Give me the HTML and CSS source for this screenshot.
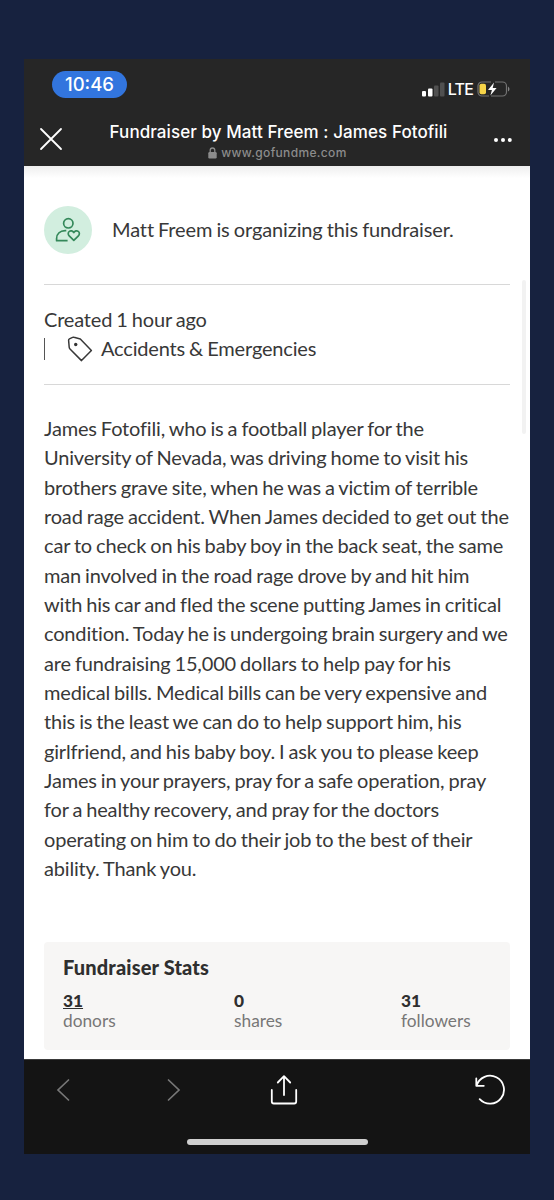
FILE: index.html
```html
<!DOCTYPE html>
<html lang="en">
<head>
  <meta charset="UTF-8">
  <title>Fundraiser by Matt Freem : James Fotofili</title>
  <link rel="stylesheet" href="styles.css">
</head>
<body>

<div class="phone">
  <header class="browser-top">
    <div class="status-bar">
      <span class="time-pill">10:46</span>
      <div class="status-icons">
        <svg class="signal" width="23" height="15" viewBox="0 0 23 15">
          <rect x="0" y="9" width="4" height="5.500" rx="1" fill="#fff"/>
          <rect x="6" y="6.500" width="4.500" height="8" rx="1" fill="#fff"/>
          <rect x="12" y="3.500" width="4.500" height="11" rx="1" fill="#505050"/>
          <rect x="18" y="0.500" width="4.500" height="14" rx="1" fill="#505050"/>
        </svg>
        <span class="network">LTE</span>
        <svg class="battery" width="33" height="16" viewBox="0 0 33 16">
          <path d="M14 1H5a4 4 0 0 0-4 4v6a4 4 0 0 0 4 4h7M18 1h7.500a4 4 0 0 1 4 4v6a4 4 0 0 1-4 4H14" fill="none" stroke="#737373" stroke-width="1.200"/>
          <path d="M31 5.500q1.500 1 1.500 2.500T31 10.500z" fill="#858585"/>
          <rect x="2.500" y="2.700" width="6.500" height="10.600" rx="1.800" fill="#f6d448"/>
          <path d="M17 1.500l-6 7.500h3.900l-1.500 5.500 6.200-7.500h-3.900z" fill="#fff"/>
        </svg>
      </div>
    </div>
    <div class="title-bar">
      <svg class="close" width="24" height="24" viewBox="0 0 24 24">
        <path d="M2 2l20 20M22 2L2 22" stroke="#fff" stroke-width="1.800" stroke-linecap="round"/>
      </svg>
      <div class="page-title">
        <strong>Fundraiser by Matt Freem : James Fotofili</strong>
        <span class="address">
          <svg width="9" height="12" viewBox="0 0 9 12">
            <path d="M2.200 5.500V3.300a2.300 2.300 0 0 1 4.600 0v2.200" fill="none" stroke="#8c8c8c" stroke-width="1.300"/>
            <rect x="0.300" y="5" width="8.400" height="6.500" rx="1.200" fill="#8c8c8c"/>
          </svg>
          www.gofundme.com
        </span>
      </div>
      <svg class="more" width="18" height="4" viewBox="0 0 18 4">
        <circle cx="2" cy="2" r="2" fill="#fff"/>
        <circle cx="9" cy="2" r="2" fill="#fff"/>
        <circle cx="15.800" cy="2" r="2" fill="#fff"/>
      </svg>
    </div>
  </header>

  <main class="content">
    <div class="scrollbar"></div>

    <div class="organizer">
      <div class="avatar">
        <svg width="26" height="26" viewBox="0 0 26 26" fill="none" stroke="#34885a" stroke-width="1.700" stroke-linejoin="round">
          <circle cx="13.300" cy="6.300" r="4.700"/>
          <path d="M12.600 23.700H1.600v-2.200c0-4.700 3.600-7.700 8.500-7.900h1.200"/>
          <path d="M18.800 23.300l-4.600-4.500c-1.400-1.400-1.200-3.500.1-4.400 1.500-1.100 3.400-.6 4.500 1.100 1.100-1.700 3-2.200 4.500-1.100 1.300.9 1.500 3 .1 4.400z"/>
        </svg>
      </div>
      <p>Matt Freem is organizing this fundraiser.</p>
    </div>

    <div class="meta">
      <div>Created 1 hour ago</div>
      <div class="category">
        <svg width="26" height="26" viewBox="0 0 26 26">
          <path d="M1.600 4.300Q1.500 3.400 2.400 2.900L5.600 1.400Q6.300 1.100 7 1.300L13.300 2.900 24.400 14.400 14.500 24.600 3 13Q2.300 12.300 2.200 11.200z" fill="none" stroke="#383838" stroke-width="1.500" stroke-linejoin="round"/>
          <circle cx="8.700" cy="8.500" r="1.700" fill="#333"/>
        </svg>
        <span>Accidents &amp; Emergencies</span>
      </div>
    </div>

    <p class="story">
      James Fotofili, who is a football player for the<br>
      University of Nevada, was driving home to visit his<br>
      brothers grave site, when he was a victim of terrible<br>
      road rage accident. When James decided to get out the<br>
      car to check on his baby boy in the back seat, the same<br>
      man involved in the road rage drove by and hit him<br>
      with his car and fled the scene putting James in critical<br>
      condition. Today he is undergoing brain surgery and we<br>
      are fundraising 15,000 dollars to help pay for his<br>
      medical bills. Medical bills can be very expensive and<br>
      this is the least we can do to help support him, his<br>
      girlfriend, and his baby boy. I ask you to please keep<br>
      James in your prayers, pray for a safe operation, pray<br>
      for a healthy recovery, and pray for the doctors<br>
      operating on him to do their job to the best of their<br>
      ability. Thank you.
    </p>

    <section class="stats">
      <h2>Fundraiser Stats</h2>
      <div class="stats-row">
        <div class="stat"><b class="linked">31</b><span>donors</span></div>
        <div class="stat"><b>0</b><span>shares</span></div>
        <div class="stat"><b>31</b><span>followers</span></div>
      </div>
    </section>
  </main>

  <footer class="browser-bottom">
    <nav class="toolbar">
      <svg width="14" height="24" viewBox="0 0 14 24"><path d="M12.500 2L2 12l10.500 10" fill="none" stroke="#777" stroke-width="1.700" stroke-linecap="round"/></svg>
      <svg width="14" height="24" viewBox="0 0 14 24"><path d="M1.500 2L12 12 1.500 22" fill="none" stroke="#777" stroke-width="1.700" stroke-linecap="round"/></svg>
      <svg width="28" height="32" viewBox="0 0 28 32" fill="none" stroke="#fff" stroke-width="1.800" stroke-linecap="round" stroke-linejoin="round">
        <path d="M14 21V2.500M7.800 8.500L14 2.200l6.200 6.300M1.800 16v11.500q0 2 2 2h20.400q2 0 2-2V16"/>
      </svg>
      <svg width="32" height="32" viewBox="0 0 32 32" fill="none" stroke="#fff" stroke-width="1.800" stroke-linecap="round" stroke-linejoin="round">
        <path d="M2.300 4.500v7.300h7.500M2.600 11.600A14 14 0 1 1 5.700 25.200"/>
      </svg>
    </nav>
    <div class="home-indicator"></div>
  </footer>
</div>

</body>
</html>
```
FILE: styles.css
```css
* {
  box-sizing: border-box;
}

body {
  margin: 0;
  height: 1200px;
  padding: 59px 24px 46px;
  background: #17223f;
  font-family: Lato, sans-serif;
  color: #383838;
  overflow: hidden;
}

svg {
  display: block;
  flex: none;
}

p, h2 {
  margin: 0;
}

.phone {
  height: 1095px;
  display: flex;
  flex-direction: column;
  background: #fff;
}

/* browser chrome */
.browser-top {
  height: 107px;
  flex: none;
  background: #262626;
  color: #fff;
  font-family: Inter, sans-serif;
}

.status-bar {
  display: flex;
  justify-content: space-between;
  padding: 12px 20px 0 28px;
}

.time-pill {
  width: 75px;
  height: 27px;
  border-radius: 14px;
  background: #3275de;
  font-size: 18.500px;
  font-weight: 500;
  line-height: 27px;
  text-align: center;
}

.status-icons {
  display: flex;
  align-items: center;
  height: 20px;
  margin-top: 8px;
}

.network {
  margin: 0 4px 0 3px;
  font-size: 16px;
  font-weight: 500;
  letter-spacing: -0.800px;
}

.title-bar {
  display: flex;
  justify-content: space-between;
  padding: 22px 18px 0 15px;
}

.close {
  margin-top: 6px;
}

.more {
  margin-top: 17px;
}

.page-title {
  display: flex;
  flex-direction: column;
  align-items: center;
}

.page-title strong {
  font-size: 17px;
  font-weight: 550;
  letter-spacing: 0.080px;
  line-height: 22px;
  white-space: nowrap;
}

.address {
  display: flex;
  align-items: center;
  gap: 4px;
  margin-right: 2px;
  font-size: 12px;
  font-weight: 500;
  line-height: 20px;
  letter-spacing: 0.350px;
  color: #8c8c8c;
}

/* fundraiser page */
.content {
  flex: 1;
  position: relative;
  padding: 0 20px;
  background: linear-gradient(#eee, #fff 12px);
  font-size: 20px;
  line-height: 29.350px;
  word-spacing: -0.900px;
  letter-spacing: -0.170px;
  font-variant-ligatures: none;
}

.scrollbar {
  position: absolute;
  top: 114px;
  right: 4px;
  width: 4px;
  height: 154px;
  border-radius: 2px;
  background: #f2f2f2;
}

.organizer {
  display: flex;
  align-items: center;
  gap: 20px;
  height: 119px;
  padding-top: 10px;
  border-bottom: 1px solid #d8d8d8;
}

.organizer p {
  letter-spacing: -0.120px;
}

.avatar {
  display: flex;
  align-items: center;
  justify-content: center;
  width: 48px;
  height: 48px;
  border-radius: 50%;
  background: #d2eedf;
}

.meta {
  height: 100px;
  padding-top: 20px;
  border-bottom: 1px solid #d8d8d8;
}

.category {
  display: flex;
  align-items: center;
  gap: 8px;
}

.category::before {
  content: "";
  width: 1px;
  height: 22px;
  margin-right: 14px;
  background: #555;
}

.story {
  padding-top: 29px;
  white-space: nowrap;
}

.stats {
  height: 108px;
  margin-top: 58px;
  padding: 13px 19px;
  border-radius: 4px;
  background: #f7f6f5;
}

.stats h2 {
  font-size: 20px;
  font-weight: 900;
  line-height: 24px;
  letter-spacing: 0.150px;
  word-spacing: 0;
  color: #2f2f2f;
}

.stats-row {
  display: grid;
  grid-template-columns: 171px 167px auto;
  margin-top: 12px;
}

.stat b,
.stat span {
  display: block;
  font-size: 17.300px;
  line-height: 20px;
  letter-spacing: 0;
}

.stat b {
  width: max-content;
  font-weight: 900;
  color: #2f2f2f;
}

.stat span {
  color: #777;
}

.linked {
  text-decoration: underline;
}

/* bottom toolbar */
.browser-bottom {
  height: 95px;
  flex: none;
  border-top: 1px solid #3a3a3a;
  background: #141414;
}

.toolbar {
  display: flex;
  align-items: center;
  height: 60px;
  padding: 0 24px 0 32px;
}

.toolbar svg:nth-child(2) {
  margin-left: 97px;
}

.toolbar svg:nth-child(3) {
  margin-left: 89px;
}

.toolbar svg:nth-child(4) {
  margin-left: auto;
}

.home-indicator {
  width: 181px;
  height: 6px;
  margin: 19px 0 0 163px;
  border-radius: 3px;
  background: #cfcfcf;
}
```
